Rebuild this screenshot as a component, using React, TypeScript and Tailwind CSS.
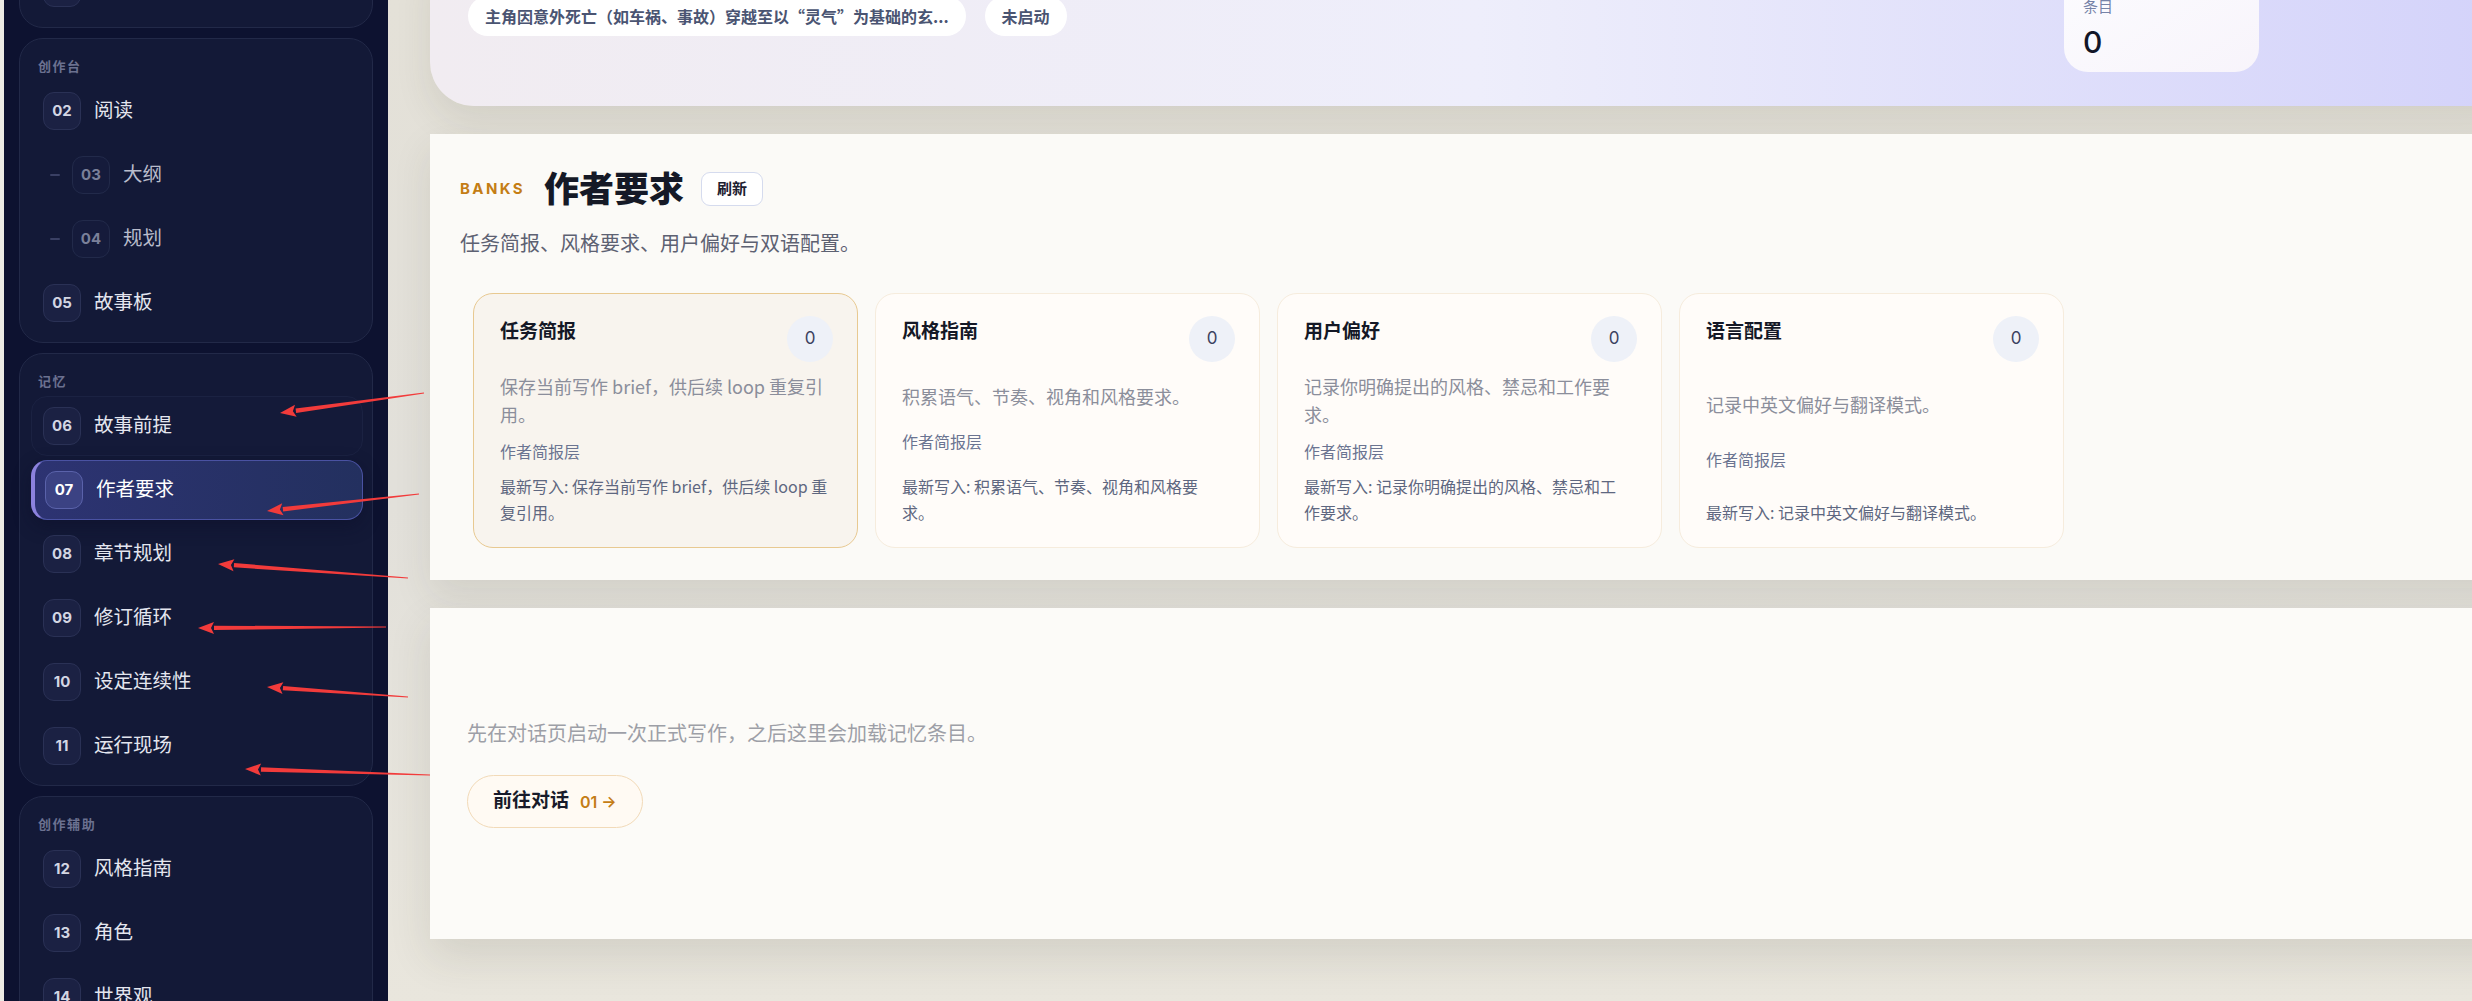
import type { ReactNode } from 'react';

type NavItem = { no: string; label: string; sub?: boolean; active?: boolean; hover?: boolean };

const groups: { label: string; items: NavItem[] }[] = [
  { label: '开始', items: [{ no: '01', label: '对话' }] },
  {
    label: '创作台',
    items: [
      { no: '02', label: '阅读' },
      { no: '03', label: '大纲', sub: true },
      { no: '04', label: '规划', sub: true },
      { no: '05', label: '故事板' },
    ],
  },
  {
    label: '记忆',
    items: [
      { no: '06', label: '故事前提', hover: true },
      { no: '07', label: '作者要求', active: true },
      { no: '08', label: '章节规划' },
      { no: '09', label: '修订循环' },
      { no: '10', label: '设定连续性' },
      { no: '11', label: '运行现场' },
    ],
  },
  {
    label: '创作辅助',
    items: [
      { no: '12', label: '风格指南' },
      { no: '13', label: '角色' },
      { no: '14', label: '世界观' },
      { no: '15', label: '伏笔' },
    ],
  },
];

// lines split where the cards wrap
const banks = [
  {
    title: '任务简报',
    desc: ['保存当前写作 brief，供后续 loop 重复引', '用。'],
    latest: ['最新写入: 保存当前写作 brief，供后续 loop 重', '复引用。'],
    active: true,
  },
  {
    title: '风格指南',
    desc: ['积累语气、节奏、视角和风格要求。'],
    latest: ['最新写入: 积累语气、节奏、视角和风格要', '求。'],
  },
  {
    title: '用户偏好',
    desc: ['记录你明确提出的风格、禁忌和工作要', '求。'],
    latest: ['最新写入: 记录你明确提出的风格、禁忌和工', '作要求。'],
  },
  {
    title: '语言配置',
    desc: ['记录中英文偏好与翻译模式。'],
    latest: ['最新写入: 记录中英文偏好与翻译模式。'],
  },
];

// annotation arrows: tail x, tail y, tip x, tip y
const arrows = [
  [424, 393, 280, 413],
  [419, 494, 267, 511],
  [408, 578, 218, 564],
  [386, 627, 198, 628],
  [408, 697, 267, 687],
  [430, 775, 245, 769],
];

export default function App() {
  return (
    <div className="relative flex h-[1001px] w-[2472px] overflow-hidden bg-[#e8e5dc] font-['Inter','Noto_Sans_CJK_SC',sans-serif]">
      <div className="w-[4px] shrink-0 bg-[#ecebe4]" />

      <aside className="w-[384px] shrink-0 bg-[#0d1230] px-[15px]">
        <div className="-mt-[85px] flex flex-col gap-[10px]">
          {groups.map((g) => (
            <NavGroup key={g.label} label={g.label} items={g.items} />
          ))}
        </div>
      </aside>

      <main className="flex min-w-0 flex-1 flex-col gap-[28px] bg-gradient-to-b from-[#e4e1d8] via-[#e2e0da] to-[#e9e6dd] pl-[42px]">
        <Hero />
        <BankPanel />
        <EmptyPanel />
      </main>

      <svg className="pointer-events-none absolute left-0 top-0" width="2472" height="1001">
        {arrows.map(([x1, y1, x2, y2], i) => (
          <Arrow key={i} x1={x1} y1={y1} x2={x2} y2={y2} />
        ))}
      </svg>
    </div>
  );
}

function NavGroup({ label, items }: { label: string; items: NavItem[] }) {
  return (
    <section className="rounded-[24px] border border-[#222948] bg-[#131937] pb-[9px] pt-[18px]">
      <p className="h-[18px] pl-[18px] text-[13px] font-bold leading-[18px] tracking-[0.12em] text-[#6b7190]">{label}</p>
      <div className="mt-[6px] flex flex-col gap-[4px]">
        {items.map((it) => (
          <NavRow key={it.no} item={it} />
        ))}
      </div>
    </section>
  );
}

function NavRow({ item }: { item: NavItem }) {
  if (item.active) {
    return (
      <div className="ml-[11px] mr-[9px] flex h-[60px] items-center rounded-[16px] border border-l-4 border-[#4a52a2] border-l-[#8c82de] bg-gradient-to-r from-[#2d3372] to-[#23305f] pl-[10px] shadow-[0_6px_18px_rgba(10,14,40,0.45)]">
        <span className="flex h-[38px] w-[38px] items-center justify-center rounded-[11px] border border-[#5a62aa] bg-[#3b4283] text-[15px] font-bold text-white">
          {item.no}
        </span>
        <span className="ml-[13px] text-[19.5px] text-white">{item.label}</span>
      </div>
    );
  }
  if (item.sub) {
    return (
      <div className="ml-[11px] mr-[9px] flex h-[60px] items-center pl-[19px]">
        <span className="h-[2px] w-[10px] rounded bg-[#3a4064]" />
        <span className="ml-[12px] flex h-[38px] w-[38px] items-center justify-center rounded-[11px] border border-[#222a4a] bg-[#151b3b] text-[15px] font-bold text-[#7a8099]">
          {item.no}
        </span>
        <span className="ml-[13px] text-[19.5px] text-[#b9bccb]">{item.label}</span>
      </div>
    );
  }
  return (
    <div
      className={`ml-[11px] mr-[9px] flex h-[60px] items-center rounded-[16px] border pl-[11px] ${
        item.hover ? 'border-[#1b2242] bg-[#141a39]' : 'border-transparent'
      }`}
    >
      <Badge>{item.no}</Badge>
      <span className="ml-[13px] text-[19.5px] text-[#e4e6ef]">{item.label}</span>
    </div>
  );
}

function Badge({ children }: { children: ReactNode }) {
  return (
    <span className="flex h-[38px] w-[38px] items-center justify-center rounded-[11px] border border-[#2a3155] bg-[#1b2143] text-[15px] font-bold text-[#d3d6e3]">
      {children}
    </span>
  );
}

function Hero() {
  return (
    <section className="-mt-[60px] flex h-[166px] w-[2100px] shrink-0 items-end justify-between rounded-[44px] bg-gradient-to-r from-[#f1ecf1] via-[#eeeefb] to-[#d3d2fa] pb-[34px] pl-[38px] pr-[271px] shadow-[0_16px_36px_rgba(60,55,40,0.10)]">
      <div className="mb-[36px] flex items-center gap-[19px]">
        <span className="flex h-[40px] items-center rounded-full bg-white px-[17px] font-['Noto_Sans_CJK_SC',sans-serif] text-[16px] font-bold text-[#4a5472]">
          主角因意外死亡（如车祸、事故）穿越至以“灵气”为基础的玄...
        </span>
        <span className="flex h-[40px] items-center rounded-full bg-white px-[17px] font-['Noto_Sans_CJK_SC',sans-serif] text-[16px] font-bold text-[#4a5472]">
          未启动
        </span>
      </div>
      <div className="w-[195px] rounded-[24px] bg-gradient-to-br from-white/90 to-[#fbf7fb]/90 px-[19px] pb-[10px] pt-[20px]">
        <p className="text-[15px] leading-[22px] text-[#7683a8]">条目</p>
        <p className="mt-[4px] text-[30px] font-medium leading-[40px] text-[#121628]">0</p>
      </div>
    </section>
  );
}

function BankPanel() {
  return (
    <section className="h-[446px] w-[2100px] shrink-0 bg-[#fbfaf7] pl-[30px] pt-[38px] shadow-[0_16px_36px_rgba(60,55,40,0.10)]">
      <div className="flex h-[34px] items-center">
        <span className="text-[15px] font-bold tracking-[0.16em] text-[#c47d14]">BANKS</span>
        <h1 className="ml-[19px] text-[35px] font-black leading-none text-[#151926]">作者要求</h1>
        <button className="ml-[17px] flex h-[34px] w-[62px] items-center justify-center rounded-[9px] border border-[#d5dbee] bg-white text-[15px] font-bold text-[#1c2030]">
          刷新
        </button>
      </div>
      <p className="mt-[23px] text-[20px] leading-[30px] text-[#5d6172]">任务简报、风格要求、用户偏好与双语配置。</p>
      <div className="ml-[13px] mt-[34px] grid grid-cols-[repeat(4,385px)] gap-[17px]">
        {banks.map((b) => (
          <BankCard key={b.title} {...b} />
        ))}
      </div>
    </section>
  );
}

function BankCard({ title, desc, latest, active }: { title: string; desc: string[]; latest: string[]; active?: boolean }) {
  return (
    <div
      className={`flex h-[255px] flex-col justify-between rounded-[20px] border py-[22px] pl-[26px] pr-[20px] font-['Noto_Sans_CJK_SC',sans-serif] ${
        active ? 'border-[#e8c991] bg-[#f8f4ee]' : 'border-[#f6ecdd] bg-[#fffcf9]'
      }`}
    >
      <div className="flex items-start justify-between pr-[4px]">
        <h3 className="text-[19px] font-bold leading-[28px] text-[#141826]">{title}</h3>
        <span className="flex h-[46px] w-[46px] items-center justify-center rounded-full bg-[#eef1f8] font-['Inter',sans-serif] text-[17px] text-[#3b4360]">
          0
        </span>
      </div>
      <p className="text-[18px] leading-[28px] text-[#8b8e9b]">
        {desc.map((l) => (
          <span key={l} className="block whitespace-nowrap">{l}</span>
        ))}
      </p>
      <p className="text-[16px] leading-[24px] text-[#6b7491]">作者简报层</p>
      <p className="text-[16px] leading-[26px] text-[#5e6780]">
        {latest.map((l) => (
          <span key={l} className="block whitespace-nowrap">{l}</span>
        ))}
      </p>
    </div>
  );
}

function EmptyPanel() {
  return (
    <section className="flex h-[331px] w-[2100px] shrink-0 flex-col justify-center bg-[#fcfbf8] pl-[37px] shadow-[0_18px_40px_rgba(60,55,40,0.12)]">
      <p className="text-[20px] leading-[30px] text-[#9d9fa7]">先在对话页启动一次正式写作，之后这里会加载记忆条目。</p>
      <button className="mt-[26px] flex h-[53px] w-fit items-center gap-[11px] rounded-full border border-[#f2dab8] bg-[#fffaf3] px-[25px]">
        <span className="text-[19px] font-bold text-[#181b2a]">前往对话</span>
        <span className="text-[16px] font-semibold text-[#c47d15]">01 →</span>
      </button>
    </section>
  );
}

function Arrow({ x1, y1, x2, y2 }: { x1: number; y1: number; x2: number; y2: number }) {
  const dx = x2 - x1;
  const dy = y2 - y1;
  const len = Math.hypot(dx, dy);
  const ux = dx / len;
  const uy = dy / len;
  const px = -uy;
  const py = ux;
  const bx = x2 - ux * 16;
  const by = y2 - uy * 16;
  const shaft = [
    [x1 + px * 0.6, y1 + py * 0.6],
    [bx + px * 2.2, by + py * 2.2],
    [bx - px * 2.2, by - py * 2.2],
    [x1 - px * 0.6, y1 - py * 0.6],
  ];
  const head = [
    [x2, y2],
    [bx + px * 6, by + py * 6],
    [bx + ux * 3, by + uy * 3],
    [bx - px * 6, by - py * 6],
  ];
  const pts = (a: number[][]) => a.map((p) => p.join(',')).join(' ');
  return (
    <g fill="#f23b3b">
      <polygon points={pts(shaft)} />
      <polygon points={pts(head)} />
    </g>
  );
}
